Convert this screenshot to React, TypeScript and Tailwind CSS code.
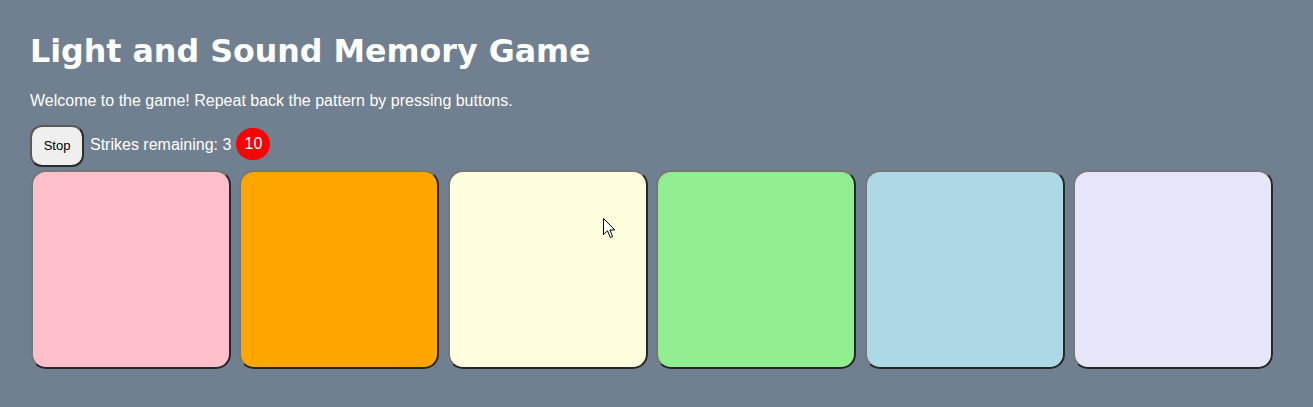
import React from 'react';

const pads = [
  { id: 1, color: 'bg-[#ffc0cb]' },
  { id: 2, color: 'bg-[#ffa500]' },
  { id: 3, color: 'bg-[#ffffe0]' },
  { id: 4, color: 'bg-[#90ee90]' },
  { id: 5, color: 'bg-[#add8e6]' },
  { id: 6, color: 'bg-[#e6e6fa]' }
];

function Cursor() {
  return (
    <svg className="absolute left-[603px] top-[218px]" width="13" height="21" viewBox="0 0 13 21">
      <path
        d="M0.5 0.5 L0.5 16.5 L4.5 12.8 L7.3 19.5 L9.6 18.5 L6.9 12 L11.8 12 Z"
        fill="#fff"
        stroke="#000"
        strokeWidth="1"
        strokeLinejoin="miter"
      />
    </svg>
  );
}

export default function App() {
  return (
    <div className="relative min-h-[407px] bg-[#708090] pl-[30px] pt-[33px] text-white font-['Liberation_Sans',Arial,sans-serif]">
      <h1 className="text-[31.7px] leading-[37px] font-bold font-['DejaVu_Sans',Verdana,sans-serif]">
        Light and Sound Memory Game
      </h1>
      <p className="mt-[22px] text-[16px] leading-[18px]">
        Welcome to the game! Repeat back the pattern by pressing buttons.
      </p>

      <div className="mt-[15px] flex items-center h-[42px]">
        <button className="w-[54px] h-[42px] rounded-[12px] bg-[#efefef] text-black text-[13px] border-2 border-t-[#5a5a5a] border-l-[#5a5a5a] border-r-[#2b2b2b] border-b-[#2b2b2b]">
          Stop
        </button>
        <span className="ml-[6px] text-[16px] -mt-[3px]">Strikes remaining: 3</span>
        <span className="ml-[5px] -mt-[4px] w-[34px] h-[32px] rounded-full bg-[#ff0000] flex items-center justify-center text-[16px]">
          10
        </span>
      </div>

      <div className="mt-[3px] ml-[1px] flex gap-[8.4px]">
        {pads.map((pad) => (
          <button
            key={pad.id}
            className={`shrink-0 w-[200px] h-[199px] rounded-[15px] border-2 border-t-[#767676] border-l-[#767676] border-r-[#262626] border-b-[#262626] ${pad.color}`}
          />
        ))}
      </div>

      <Cursor />
    </div>
  );
}
